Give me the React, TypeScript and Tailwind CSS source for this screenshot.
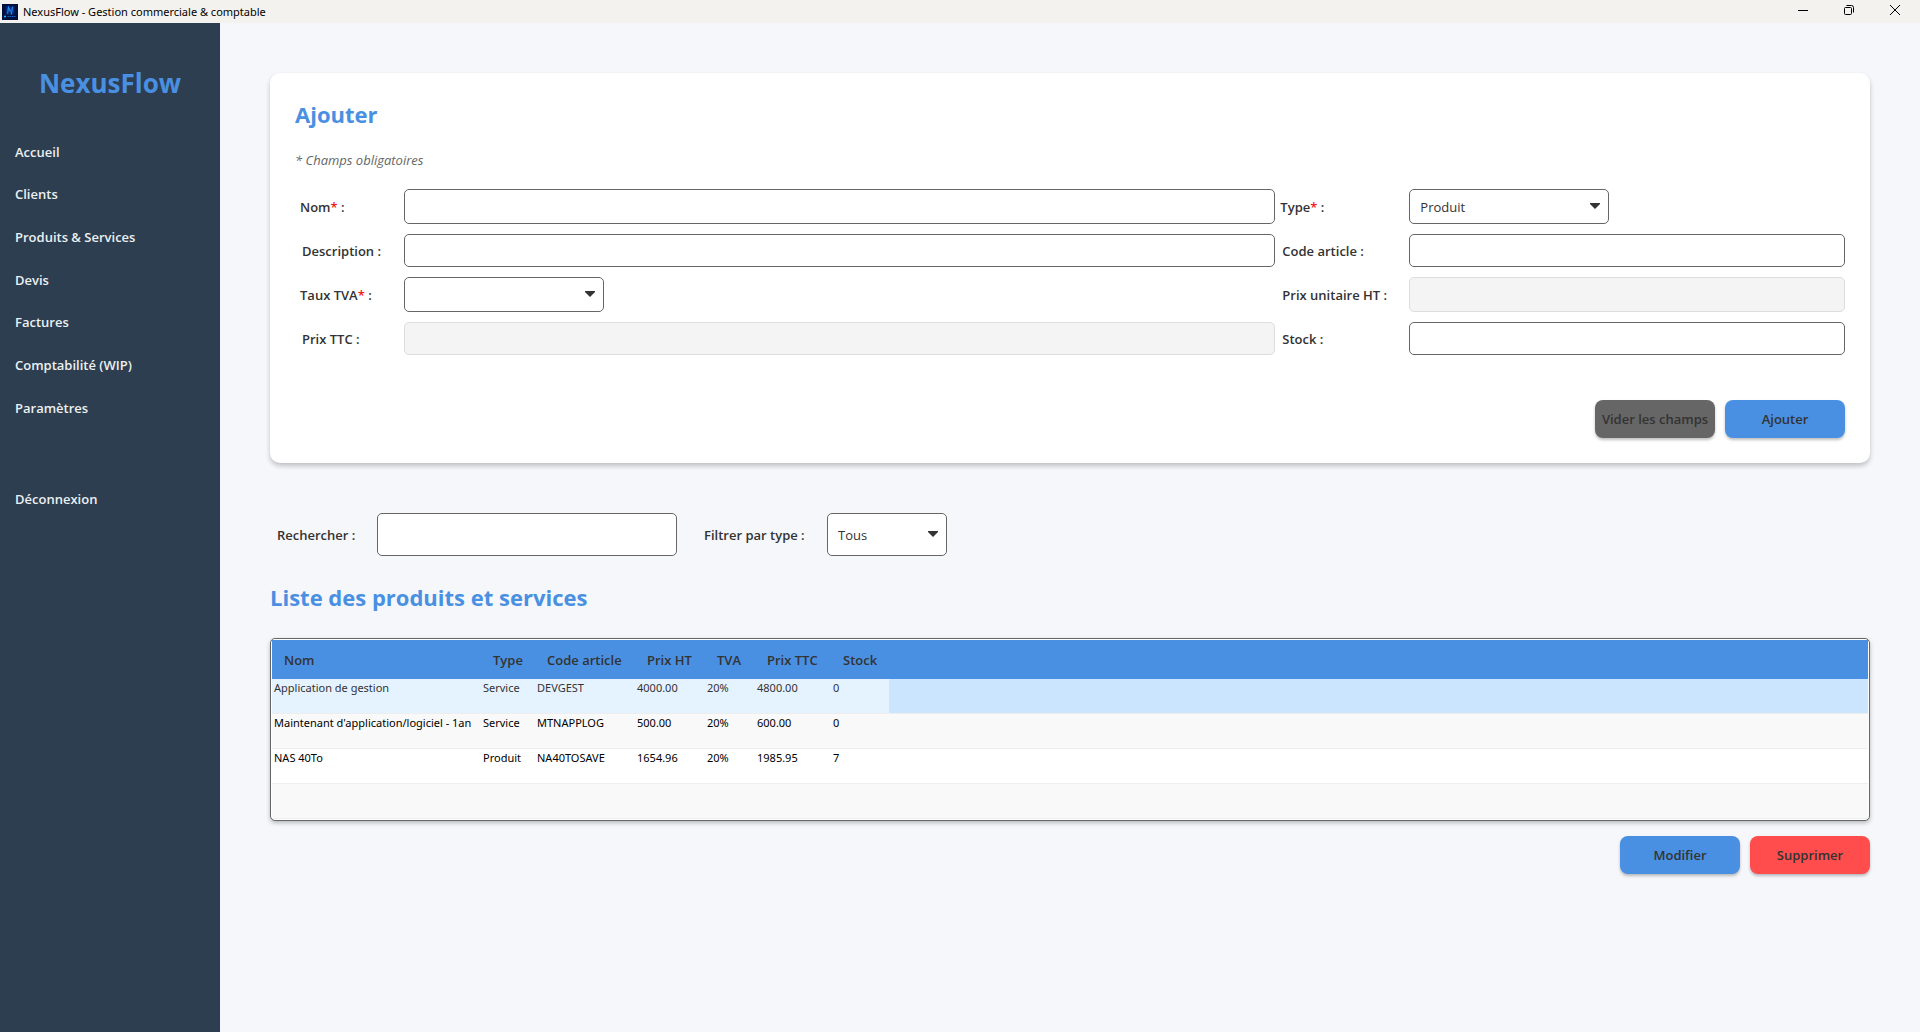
import React, { useState } from 'react';

const navItems = [
  'Accueil',
  'Clients',
  'Produits & Services',
  'Devis',
  'Factures',
  'Comptabilité (WIP)',
  'Paramètres',
];

const columns = [
  { label: 'Nom', width: 'w-[209px]' },
  { label: 'Type', width: 'w-[54px]' },
  { label: 'Code article', width: 'w-[100px]' },
  { label: 'Prix HT', width: 'w-[70px]' },
  { label: 'TVA', width: 'w-[50px]' },
  { label: 'Prix TTC', width: 'w-[76px]' },
  { label: 'Stock', width: 'w-[58px]' },
];

const products = [
  ['Application de gestion', 'Service', 'DEVGEST', '4000.00', '20%', '4800.00', '0'],
  ["Maintenant d'application/logiciel - 1an", 'Service', 'MTNAPPLOG', '500.00', '20%', '600.00', '0'],
  ['NAS 40To', 'Produit', 'NA40TOSAVE', '1654.96', '20%', '1985.95', '7'],
];

function AppIcon() {
  return (
    <svg className="w-4 h-4" viewBox="0 0 16 16" aria-hidden="true">
      <rect width="16" height="16" fill="#03103f" />
      <rect x="3.5" y="2" width="9" height="9" fill="#06256e" />
      <path d="M5.500 9.500L6.500 3.500L9.500 9L10.500 3" fill="none" stroke="#1f8cf5" strokeWidth="1.3" />
      <path d="M5 7.500h6.500" stroke="#1450b8" strokeWidth="0.8" />
      <path d="M2 12.500h2" stroke="#19c4f5" strokeWidth="1.6" />
      <path d="M5.500 12.500h8" stroke="#1767c9" strokeWidth="1.2" strokeDasharray="1.5 0.7" />
    </svg>
  );
}

function TitleBar() {
  return (
    <header className="flex h-[23px] shrink-0 items-center bg-[#f4f2ee] pr-[2px] pl-[2px] text-black">
      <AppIcon />
      <span className="ml-[5px] font-['Noto_Sans',sans-serif] text-[11px] leading-4">NexusFlow - Gestion commerciale &amp; comptable</span>
      <div className="ml-auto flex h-5 self-start">
        <button type="button" aria-label="Réduire" className="flex w-[46px] items-center justify-center">
          <svg className="w-[10px] h-[10px]" viewBox="0 0 10 10" fill="none" stroke="currentColor">
            <path d="M0 5.5h10" />
          </svg>
        </button>
        <button type="button" aria-label="Restaurer" className="flex w-[46px] items-center justify-center">
          <svg className="w-[10px] h-[10px]" viewBox="0 0 10 10" fill="none" stroke="currentColor">
            <rect x="0.5" y="2.5" width="7" height="7" rx="1" />
            <path d="M2.5 0.5h5a2 2 0 0 1 2 2v5" />
          </svg>
        </button>
        <button type="button" aria-label="Fermer" className="flex w-[46px] items-center justify-center">
          <svg className="w-[10px] h-[10px]" viewBox="0 0 10 10" fill="none" stroke="currentColor">
            <path d="M0 0l10 10M10 0L0 10" />
          </svg>
        </button>
      </div>
    </header>
  );
}

function Sidebar() {
  return (
    <aside className="w-[220px] shrink-0 bg-[#2c3e50] text-[#ecf0f1]">
      <h1 className="mt-10 text-center text-[26px] leading-10 font-bold text-[#4a90e2]">NexusFlow</h1>
      <nav className="mt-7 text-[13px] font-semibold">
        <ul className="grid h-[299px] grid-rows-7">
          {navItems.map((item) => (
            <li key={item} className="flex items-center px-[15px]">
              <a href="#">{item}</a>
            </li>
          ))}
        </ul>
        <a href="#" className="mt-12 flex h-[43px] items-center px-[15px]">Déconnexion</a>
      </nav>
    </aside>
  );
}

function FieldLabel({ id, text, required }: { id: string; text: string; required?: boolean }) {
  return (
    <label htmlFor={id} className={required ? 'pt-0.5 pl-[5px] font-semibold' : 'pt-0.5 pl-[7px] font-semibold'}>
      {text}
      {required && <span className="text-[#f01c1c]">*</span>} :
    </label>
  );
}

function TextField({ id, className, disabled }: { id: string; className: string; disabled?: boolean }) {
  return (
    <input
      id={id}
      type="text"
      disabled={disabled}
      className={`${className} rounded-[5px] border border-[#666666] bg-white px-[10px] disabled:border-[#dddddd] disabled:bg-[#f4f4f4]`}
    />
  );
}

function SelectField({ id, className, options }: { id: string; className: string; options: string[] }) {
  return (
    <div className={`${className} relative`}>
      <select id={id} className="h-full w-full appearance-none rounded-[5px] border border-[#666666] bg-white px-[10px] pt-0.5">
        {options.map((option) => (
          <option key={option}>{option}</option>
        ))}
      </select>
      <svg className="pointer-events-none absolute top-1/2 right-[9px] -mt-1 w-[10px] h-[6px]" viewBox="0 0 10 6" aria-hidden="true">
        <path d="M0 0h10v1L5 6L0 1z" fill="#333333" />
      </svg>
    </div>
  );
}

function ActionButton({ label, className }: { label: string; className: string }) {
  return (
    <button
      type="button"
      className={`${className} h-[38px] w-[120px] rounded-[8px] pt-0.5 font-semibold whitespace-nowrap text-[#333333] shadow-[0_2px_3px_rgba(0,0,0,0.25)]`}
    >
      {label}
    </button>
  );
}

function ProductForm() {
  return (
    <form className="rounded-[10px] bg-white p-[25px] shadow-[0_3px_5px_rgba(0,0,0,0.22)]">
      <h2 className="text-[22px] leading-8 font-bold text-[#4a90e2]">Ajouter</h2>
      <p className="mt-5 text-[13px] leading-5 text-[#666666] italic">* Champs obligatoires</p>
      <div className="mt-[19px] grid grid-cols-[109px_2fr_134px_1fr] items-center gap-y-[10px]">
        <FieldLabel id="nom" text="Nom" required />
        <TextField id="nom" className="h-[35px]" />
        <FieldLabel id="type" text="Type" required />
        <SelectField id="type" className="h-[35px] w-[200px]" options={['Produit', 'Service']} />

        <FieldLabel id="description" text="Description" />
        <TextField id="description" className="h-[33px]" />
        <FieldLabel id="code" text="Code article" />
        <TextField id="code" className="h-[33px]" />

        <FieldLabel id="tva" text="Taux TVA" required />
        <SelectField id="tva" className="h-[35px] w-[200px]" options={['', '20%', '10%', '5.5%']} />
        <FieldLabel id="prix-ht" text="Prix unitaire HT" />
        <TextField id="prix-ht" className="h-[35px]" disabled />

        <FieldLabel id="prix-ttc" text="Prix TTC" />
        <TextField id="prix-ttc" className="h-[33px]" disabled />
        <FieldLabel id="stock" text="Stock" />
        <TextField id="stock" className="h-[33px]" />
      </div>
      <div className="mt-[45px] flex justify-end gap-[10px]">
        <ActionButton label="Vider les champs" className="bg-[#666666]" />
        <ActionButton label="Ajouter" className="bg-[#4a90e2]" />
      </div>
    </form>
  );
}

function ProductTable() {
  const [selected, setSelected] = useState(0);

  return (
    <div className="rounded-[5px] border border-[#666666] bg-white p-px shadow-[0_2px_4px_rgba(0,0,0,0.25)]">
      <table className="w-full table-fixed border-separate border-spacing-0 text-left">
        <thead className="bg-[#4a90e2]">
          <tr className="h-[39px]">
            {columns.map((column) => (
              <th key={column.label} className={`${column.width} pt-0.5 pl-3 font-semibold whitespace-nowrap`}>
                {column.label}
              </th>
            ))}
            <td />
          </tr>
        </thead>
        <tbody className="font-['Noto_Sans',sans-serif] text-[11px] leading-4 text-black">
          {products.map((product, row) => (
            <tr
              key={product[0]}
              onClick={() => setSelected(row)}
              className={row === selected ? 'h-[35px] bg-[#e5f2ff] text-[#333333]' : 'h-[35px] odd:bg-white even:bg-[#f9f9f9]'}
            >
              {product.map((value, i) => (
                <td key={i} className="border-b border-[#eeeeee] pt-px pl-[2px] align-top whitespace-nowrap">
                  {value}
                </td>
              ))}
              <td className={row === selected ? 'border-b border-[#eeeeee] bg-[#cce5ff]' : 'border-b border-[#eeeeee]'} />
            </tr>
          ))}
          <tr className="h-[35px] bg-[#f9f9f9]">
            <td colSpan={8} className="border-b border-[#eeeeee]" />
          </tr>
        </tbody>
      </table>
    </div>
  );
}

export default function App() {
  return (
    <div className="flex min-h-screen flex-col bg-[#f5f7fb] font-['Open_Sans',sans-serif] text-[13px] text-[#333333]">
      <TitleBar />
      <div className="flex flex-1">
        <Sidebar />
        <main className="min-w-0 flex-1 p-[50px]">
          <ProductForm />
          <div className="mt-[50px] flex items-center">
            <label htmlFor="search" className="w-[107px] pt-0.5 pl-[7px] font-semibold">Rechercher :</label>
            <TextField id="search" className="h-[43px] w-[300px]" />
            <label htmlFor="filter" className="w-[150px] pt-0.5 pl-[27px] font-semibold">Filtrer par type :</label>
            <SelectField id="filter" className="h-[43px] w-[120px]" options={['Tous', 'Produit', 'Service']} />
          </div>
          <h2 className="my-[25px] text-[22px] leading-8 font-bold text-[#4a90e2]">Liste des produits et services</h2>
          <ProductTable />
          <div className="mt-[15px] flex justify-end gap-[10px]">
            <ActionButton label="Modifier" className="bg-[#4a90e2]" />
            <ActionButton label="Supprimer" className="bg-[#ff4d4d]" />
          </div>
        </main>
      </div>
    </div>
  );
}
